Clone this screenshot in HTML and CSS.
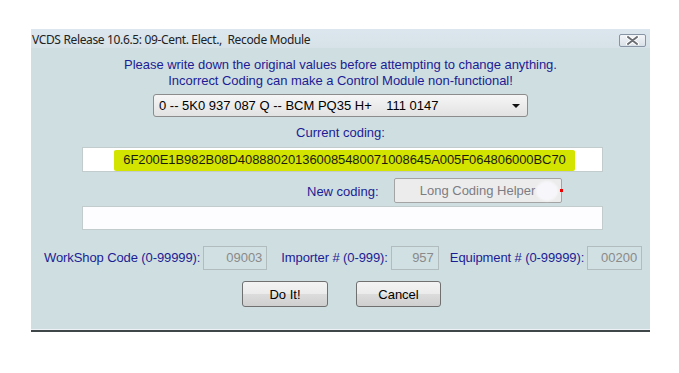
FILE: index.html
```html
<!DOCTYPE html>
<html lang="en">
<head>
<meta charset="utf-8">
<title>Recode Module</title>
<link rel="stylesheet" href="styles.css">
</head>
<body>

<div class="window">

	<div class="titlebar">
		<span class="title">VCDS Release 10.6.5: 09-Cent. Elect.,&nbsp; Recode Module</span>
		<span class="close">
			<svg width="15" height="9" viewBox="0 0 15 9">
				<path d="M3 1 L12 8 M12 1 L3 8" stroke="#fff" stroke-width="4" stroke-linecap="round"/>
				<path d="M3 1 L12 8 M12 1 L3 8" stroke="#6b6f74" stroke-width="2" stroke-linecap="round"/>
			</svg>
		</span>
	</div>

	<div class="content">

		<p class="warn">Please write down the original values before attempting to change anything.<br>Incorrect Coding can make a Control Module non-functional!</p>

		<div class="select">
			<span>0 -- 5K0 937 087 Q -- BCM PQ35 H+&nbsp;&nbsp;&nbsp; 111 0147</span>
			<span class="arrow"></span>
		</div>

		<p class="caption">Current coding:</p>

		<div class="codebox current"><span class="mark">6F200E1B982B08D408880201360085480071008645A005F064806000BC70</span></div>

		<div class="newrow">
			<span class="caption">New coding:</span>
			<button class="helper">Long Coding Helper<span class="blot"></span><span class="dot"></span></button>
		</div>

		<div class="codebox new"></div>

		<div class="fields">
			<label class="field">WorkShop Code (0-99999):<span class="num w1">09003</span></label>
			<label class="field">Importer # (0-999):<span class="num w2">957</span></label>
			<label class="field">Equipment # (0-99999):<span class="num w3">00200</span></label>
		</div>

		<div class="actions">
			<button class="btn doit">Do It!</button>
			<button class="btn cancel">Cancel</button>
		</div>

	</div>

</div>

</body>
</html>
```

FILE: styles.css
```css
html * {margin:0; padding:0;}
body {background:#fff; font:13px/16px "Liberation Sans", Arial, sans-serif; color:#000;}

.window {margin:29px 0 0 31px; width:619px; background:#cfdfe1; border-bottom:2px solid #3f4749; box-shadow:inset 0 -1px 0 #eef2f6;}

.titlebar {height:19px; display:flex; align-items:center; justify-content:space-between; background:linear-gradient(#dce6ee, #d6e2e8); padding:0 4px 0 1px;}
.title {font:12px "Noto Sans", "DejaVu Sans", sans-serif; color:#222; letter-spacing:-0.35px; position:relative; top:1px;}
.close {width:25px; height:11px; border:1px solid #8794a3; border-radius:2px; background:linear-gradient(#f2f5f8, #d9e1e8); display:flex; align-items:center; justify-content:center; position:relative; top:2px;}
.close svg {display:block;}

.content {padding:9px 0 23px;}

.warn {text-align:center; color:#1c1c94; letter-spacing:-0.04px;}

.select {margin:5px auto 0; height:21px; border:1px solid #8c8c8c; border-radius:3px; background:linear-gradient(#f6f6f6, #e2e2e2); display:flex; align-items:center; justify-content:space-between; padding:0 5px; width:363px;}
.arrow {width:0; height:0; border-left:4px solid transparent; border-right:4px solid transparent; border-top:4px solid #111; margin-right:2px;}

.caption {color:#1c1c94; white-space:nowrap;}
.content > .caption {text-align:center; margin-top:8px;}

.codebox {margin-left:51px; width:519px; background:#fff; border:1px solid #c3cccd; display:flex; align-items:center; justify-content:center;}
.current {margin-top:6px; height:23px;}
.new {margin-top:3px; height:22px; background:#fdfdff;}
.mark {background:#d3e400; color:#1b1b0a; padding:1px 9px; border-radius:2px; position:relative; left:2px; letter-spacing:-0.07px; box-shadow:0 -1px 0 #d3e400, 0 2px 0 #d3e400;}

.newrow {margin:6px 0 0 276px; display:flex; align-items:center;}
.newrow .caption {margin-top:3px;}
.helper {margin-left:15px; width:168px; height:25px; border:1px solid #a4a4a4; border-radius:2px; background:#ececec; color:#7c7c84; font:13px "Liberation Sans", Arial, sans-serif; position:relative;}
.blot {position:absolute; right:3px; top:2px; width:22px; height:20px; border-radius:50%; background:#f7f7fb; filter:blur(1px);}
.dot {position:absolute; right:-2px; top:10px; width:3px; height:3px; background:#e00;}

.fields {margin:16px 0 0 13px; display:flex; align-items:center;}
.field {color:#1c1c94; display:flex; align-items:center; margin-right:14px; white-space:nowrap; flex-shrink:0; letter-spacing:-0.1px;}
.field:nth-child(2) {margin-right:11px;}
.num {margin-left:3px; height:22px; border:1px solid #b0bcbd; background:#d1e0e2; color:#8a8a8a; display:flex; align-items:center; justify-content:flex-end; padding-right:4px; letter-spacing:0;}
.w1 {width:58px;}
.w2 {width:42px;}
.w3 {width:49px;}

.actions {margin-top:11px; display:flex; justify-content:center; gap:28px; padding-left:2px;}
.btn {height:26px; border:1px solid #707070; border-radius:3px; background:linear-gradient(#f3f3f3 0%, #ebebeb 50%, #dcdcdc 51%, #cfcfcf 100%); font:13px "Liberation Sans", Arial, sans-serif; color:#000;}
.doit {width:86px;}
.cancel {width:85px;}
```
